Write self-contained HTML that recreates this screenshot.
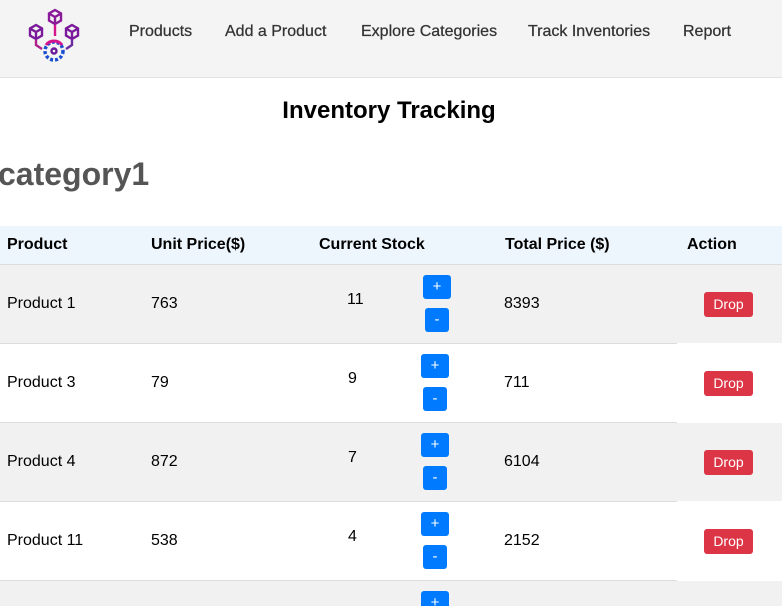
<!DOCTYPE html>
<html><head><meta charset="utf-8"><style>
*{margin:0;padding:0;box-sizing:border-box}
html,body{width:782px;height:606px;overflow:hidden}
body{background:#fff;font-family:"Liberation Sans",Arial,sans-serif;position:relative;color:#000}
.hdr{position:absolute;left:0;top:0;width:782px;height:78px;background:#f4f4f4;border-bottom:1px solid #e2e2e2}
.nav{position:absolute;top:23px;font-family:"Liberation Sans",sans-serif;font-size:16px;color:#333;-webkit-text-stroke:0.25px #333}
.a{position:absolute;white-space:nowrap}
.row{position:absolute;left:0;width:782px;height:79px}
.bl{position:absolute;left:0;width:677px;height:1px;background:#dcdcdc}
.btn{position:absolute;background:#007bff;color:#fff;border-radius:3px;font-size:15px;text-align:center;height:24px;line-height:23px}
.drop{position:absolute;left:704px;width:49px;height:25px;background:#dc3545;color:#fff;border-radius:3px;font-size:14px;text-align:center;line-height:24px}
.td{font-size:16px}
.th{font-size:16px;font-weight:bold;top:236px}
</style></head><body>
<div class="hdr">
<svg width="80" height="78" style="position:absolute;left:20px;top:0" viewBox="20 0 80 78" fill="none" stroke-width="2.4">
<g stroke="#7a1a9a">
<path d="M55 10 L61 13.5 L61 20.5 L55 24 L49 20.5 L49 13.5 Z M49 13.5 L55 17 L61 13.5 M55 17 V24" stroke="#8a1a9a"/>
<path d="M36 25 L42 28.5 L42 35.5 L36 39 L30 35.5 L30 28.5 Z M30 28.5 L36 32 L42 28.5 M36 32 V39"/>
<path d="M72 25 L78 28.5 L78 35.5 L72 39 L66 35.5 L66 28.5 Z M66 28.5 L72 32 L78 28.5 M72 32 V39"/>
</g>
<path d="M55 25 V36" stroke="#d4148c"/>
<path d="M36 40 V45 L42 49" stroke="#b0208c"/>
<path d="M72 40 V45 L66 49" stroke="#6a2aa0"/>
<circle cx="54" cy="51" r="9" stroke="#1a4fd0" stroke-width="3.5" stroke-dasharray="3 2"/>
<path d="M46 45 A10 10 0 0 1 62 45" stroke="#d4148c" stroke-width="3"/>
<circle cx="54" cy="51" r="2.5" stroke="#6a1a9a"/>
</svg>
<div class="nav" style="left:129px">Products</div>
<div class="nav" style="left:225px">Add a Product</div>
<div class="nav" style="left:361px">Explore Categories</div>
<div class="nav" style="left:528px">Track Inventories</div>
<div class="nav" style="left:683px">Report</div>
</div>
<div class="a" style="left:0;width:778px;text-align:center;top:97px;font-size:24px;font-weight:bold">Inventory Tracking</div>
<div class="a" style="left:-2px;top:156px;font-size:32px;font-weight:bold;color:#555">category1</div>
<div class="row" style="top:226px;height:38px;background:#eef6fd"></div>
<div class="bl" style="top:264px;width:782px"></div>
<div class="a th" style="left:7px">Product</div>
<div class="a th" style="left:151px">Unit Price($)</div>
<div class="a th" style="left:319px">Current Stock</div>
<div class="a th" style="left:505px">Total Price ($)</div>
<div class="a th" style="left:687px">Action</div>

<div class="row" style="top:265px;height:78px;background:#f1f1f1"></div>
<div class="bl" style="top:343px"></div>
<div class="a td" style="left:7px;top:295px">Product 1</div>
<div class="a td" style="left:151px;top:295px">763</div>
<div class="a td" style="left:347px;top:291px">11</div>
<div class="btn" style="left:423px;top:275px;width:28px">+</div>
<div class="btn" style="left:425px;top:308px;width:24px">-</div>
<div class="a td" style="left:504px;top:295px">8393</div>
<div class="drop" style="top:292px">Drop</div>

<div class="bl" style="top:422px"></div>
<div class="a td" style="left:7px;top:374px">Product 3</div>
<div class="a td" style="left:151px;top:374px">79</div>
<div class="a td" style="left:348px;top:370px">9</div>
<div class="btn" style="left:421px;top:354px;width:28px">+</div>
<div class="btn" style="left:423px;top:387px;width:24px">-</div>
<div class="a td" style="left:504px;top:374px">711</div>
<div class="drop" style="top:371px">Drop</div>

<div class="row" style="top:423px;height:78px;background:#f1f1f1"></div>
<div class="bl" style="top:501px"></div>
<div class="a td" style="left:7px;top:453px">Product 4</div>
<div class="a td" style="left:151px;top:453px">872</div>
<div class="a td" style="left:348px;top:449px">7</div>
<div class="btn" style="left:421px;top:433px;width:28px">+</div>
<div class="btn" style="left:423px;top:466px;width:24px">-</div>
<div class="a td" style="left:504px;top:453px">6104</div>
<div class="drop" style="top:450px">Drop</div>

<div class="bl" style="top:580px"></div>
<div class="a td" style="left:7px;top:532px">Product 11</div>
<div class="a td" style="left:151px;top:532px">538</div>
<div class="a td" style="left:348px;top:528px">4</div>
<div class="btn" style="left:421px;top:512px;width:28px">+</div>
<div class="btn" style="left:423px;top:545px;width:24px">-</div>
<div class="a td" style="left:504px;top:532px">2152</div>
<div class="drop" style="top:529px">Drop</div>

<div class="row" style="top:581px;height:25px;background:#f1f1f1"></div>
<div class="btn" style="left:421px;top:591px;width:28px">+</div>
</body></html>
